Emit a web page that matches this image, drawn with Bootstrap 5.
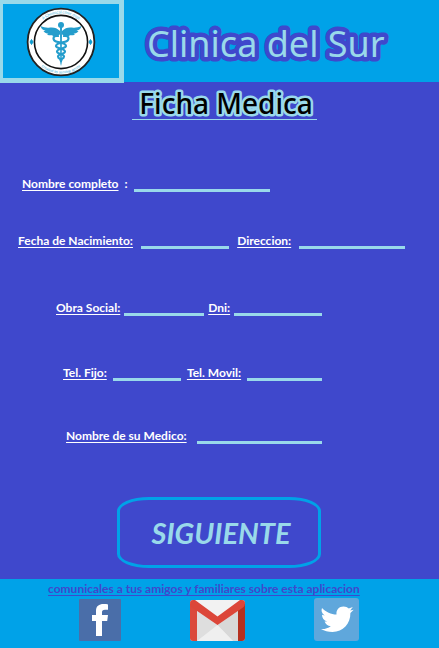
<!DOCTYPE html>
<html lang="es">
<head>
<meta charset="utf-8">
<meta name="viewport" content="width=device-width, initial-scale=1">
<title>Clinica del Sur - Ficha Medica</title>
<link rel="stylesheet" href="https://cdn.jsdelivr.net/npm/bootstrap@5.3.0/dist/css/bootstrap.min.css">
<style>
:root{--indigo:#3f48cc;--sky:#00a2e8;--ice:#99d9ea}
body{background:var(--indigo);font-family:Lato,"Open Sans",sans-serif;font-size:12px;line-height:16px;font-weight:700;color:#fff}
.topbar{background:var(--sky);height:82px}
.brand-box{width:124px;height:83px;border:solid var(--ice);border-width:4px 5px 5px 3px;background:var(--sky)}
.outlined text{font-family:"Noto Sans","Open Sans",sans-serif;paint-order:stroke;stroke-linejoin:round}
.site-name{margin-left:14px}
.site-name text{font-size:36px;font-weight:400;fill:var(--ice);stroke:var(--indigo);stroke-width:9px}
.page-name{margin-left:10px}
.page-name text{font-size:28px;font-weight:500;fill:#000;stroke:var(--ice);stroke-width:5px}
.page-name rect{fill:var(--ice)}
.form-line{height:16px}
.form-line label{text-decoration:underline;text-underline-offset:2px;white-space:nowrap;flex:none}
.form-line input{background:none;border:0;border-bottom:3px solid var(--ice);border-radius:0;padding:0;height:16px;min-width:0;color:#fff;outline:0;flex:1 1 0}
.form-line .wider{flex-grow:1.2}
.form-line .wide{flex-grow:1.1}
.line-a{margin-top:52px;padding:0 169px 0 22px;gap:6px}
.line-b{margin-top:41px;padding:0 34px 0 18px;gap:8px}
.line-c{margin-top:51px;padding:0 117px 0 56px;gap:4px}
.line-d{margin-top:49px;padding:0 117px 0 63px;gap:6px}
.line-e{margin-top:47px;padding:0 117px 0 66px;gap:10px}
.next-btn{width:204px;height:71px;margin:53px 1px 8px 0;border:3px solid var(--sky);border-radius:32px/14px;color:var(--ice);background:none;font-size:29px;line-height:36px;font-weight:700;font-style:italic;padding:0 0 0 4px}
.next-btn:hover{border-color:var(--sky);color:#fff}
.share{background:var(--sky);min-height:69px}
.share-text{color:var(--indigo);text-decoration:underline;text-underline-offset:2px;line-height:19px}
.share-links{padding:0 80px 0 79px}
.share-links a,.share-links svg{display:block}
</style>
<script src="https://cdn.jsdelivr.net/npm/bootstrap@5.3.0/dist/js/bootstrap.bundle.min.js"></script>
</head>
<body class="min-vh-100 d-flex flex-column">
<header class="topbar d-flex align-items-start">
  <div class="brand-box d-flex justify-content-center flex-shrink-0">
    <svg width="72" height="74" viewBox="0 0 72 74" role="img" aria-label="Clinica del Sur">
      <circle cx="36" cy="38" r="33.400" fill="#fff" stroke="#222" stroke-width="1.800"/>
      <circle cx="36" cy="38" r="26.600" fill="#fff" stroke="#111" stroke-width="1.600"/>
      <path d="M6.500 35.500l1.500 2.500-1.500 2.500-1.500-2.500zM65.500 35.500l1.500 2.500-1.500 2.500-1.500-2.500z" fill="#0b9bd0" stroke="#0b9bd0"/>
      <path id="arcTop" d="M7.500 38a28.500 28.500 0 0 1 57 0" fill="none"/>
      <path id="arcLow" d="M4.500 38a31.500 31.500 0 0 0 63 0" fill="none"/>
      <g fill="#45b4da" font-size="4" font-weight="400" text-anchor="middle">
        <text><textPath href="#arcTop" startOffset="50%">A Chemical clinic dept</textPath></text>
        <text><textPath href="#arcLow" startOffset="50%">created to serving gente</textPath></text>
      </g>
      <g fill="#249dcc">
        <circle cx="36" cy="21" r="3"/>
        <path d="M35 22h2l-.3 37-.7 3-.7-3z"/>
        <path d="M35 27c-3-3-6-4-10-3.500-3 .5-6 0-9.500-1.500 1 3.500 3 4.500 5 4.700-.8.300-1.400.3-2 .2 1.200 2 3 2.700 5 2.700l-1.500.6c2 1.500 4 1.200 6 .8l-1 1c3 1 6 .2 8-1.800zM37 27c3-3 6-4 10-3.500 3 .5 6 0 9.500-1.500-1 3.500-3 4.500-5 4.700.8.300 1.400.3 2 .2-1.200 2-3 2.700-5 2.700l1.500.6c-2 1.500-4 1.200-6 .8l1 1c-3 1-6 .2-8-1.800z"/>
      </g>
      <g fill="none" stroke="#249dcc" stroke-width="2.200" stroke-linecap="round">
        <path d="M33 32c-6-1-6 5 0 6 4 .8 8 1.500 8 4s-9 2.500-9 5.500 7 2 7 5-5 2-3 4.500"/>
        <path d="M39 32c6-1 6 5 0 6-4 .8-8 1.500-8 4s9 2.500 9 5.500-7 2-7 5 5 2 3 4.500"/>
      </g>
    </svg>
  </div>
  <svg class="site-name outlined flex-shrink-0" width="256" height="82"><text x="9" y="57">Clinica del Sur</text></svg>
</header>
<main class="flex-grow-1 d-flex flex-column">
  <h1 class="page-name align-self-center mb-0"><svg class="outlined d-block" width="185" height="42"><rect y="37" width="185" height="1"/><text x="94" y="32" text-anchor="middle">Ficha Medica</text></svg></h1>
  <form class="d-flex flex-column flex-grow-1">
    <div class="form-line line-a d-flex"><label for="nombre">Nombre completo</label><span>:</span><input id="nombre" type="text"></div>
    <div class="form-line line-b d-flex"><label for="fecha">Fecha de Nacimiento:</label><input id="fecha" type="text"><label for="dir">Direccion:</label><input id="dir" class="wider" type="text"></div>
    <div class="form-line line-c d-flex"><label for="obra">Obra Social:</label><input id="obra" type="text"><label for="dni">Dni:</label><input id="dni" class="wide" type="text"></div>
    <div class="form-line line-d d-flex"><label for="fijo">Tel. Fijo:</label><input id="fijo" type="text"><label for="movil">Tel. Movil:</label><input id="movil" class="wide" type="text"></div>
    <div class="form-line line-e d-flex"><label for="medico">Nombre de su Medico:</label><input id="medico" type="text"></div>
    <button type="button" class="btn next-btn align-self-center">SIGUIENTE</button>
  </form>
</main>
<footer class="share">
  <p class="mb-0 ps-5 share-text">comunicales a tus amigos y familiares sobre esta aplicacion</p>
  <nav class="share-links d-flex justify-content-between" aria-label="Compartir">
    <a href="#" aria-label="Facebook">
      <svg width="42" height="43" viewBox="0 0 42 43">
        <rect y="1" width="42" height="42" rx="1" fill="#4a6ea9"/>
        <path d="M17 38V23h-4v-6h4v-4c0-5 3-7 7.500-7 2 0 3.500.2 4.500.4v5.300h-3c-2.300 0-3 1-3 2.800V17h6l-.8 6H23v15z" fill="#fff"/>
      </svg>
    </a>
    <a href="#" aria-label="Gmail">
      <svg width="55" height="43" viewBox="0 0 55 43">
        <rect y="2" width="55" height="41" rx="3" fill="#e3e3e3"/>
        <path d="M7 13l20.500 14L7 43z" fill="#dedede"/>
        <path d="M7 13L27.500 27 48 13v30h-5L27.500 27z" fill="#d8d8d8"/>
        <path d="M7 43L27.500 27 43 43z" fill="#efefef"/>
        <path d="M3 2h49L27.500 20z" fill="#f2f2f2"/>
        <path d="M0 5l7 7v31H3q-3 0-3-3z" fill="#db4a3c"/>
        <path d="M55 5l-7 7v31h4q3 0 3-3z" fill="#b5301f"/>
        <path d="M0 5q0-3 3-3h2l22.500 16.500L50 2h2q3 0 3 3 0 3-2 4.500L27.500 27 2 9.500Q0 8 0 5z" fill="#dc4639"/>
      </svg>
    </a>
    <a href="#" aria-label="Twitter">
      <svg width="45" height="43" viewBox="0 0 45 43">
        <rect width="45" height="43" rx="3" fill="#5fa7dc"/>
        <path d="M8 10c4 4 9 6.500 14.500 6.500C22 12 25 8.500 29.500 8.500c2.200 0 4 .8 5.300 2l4-1.500-2.600 3.500 3.500-.8-3.300 3.400C36.500 26 29 34 18.500 34c-4.300 0-8-1-11.500-3 4 .2 7-.8 9.800-2.800-3.200-.2-5.200-2-6.200-4.600h2.600C9.800 22.600 8 20 8 16.800l2.700.7C7.500 15 7 12.500 8 10z" fill="#fff"/>
      </svg>
    </a>
  </nav>
</footer>
</body>
</html>
